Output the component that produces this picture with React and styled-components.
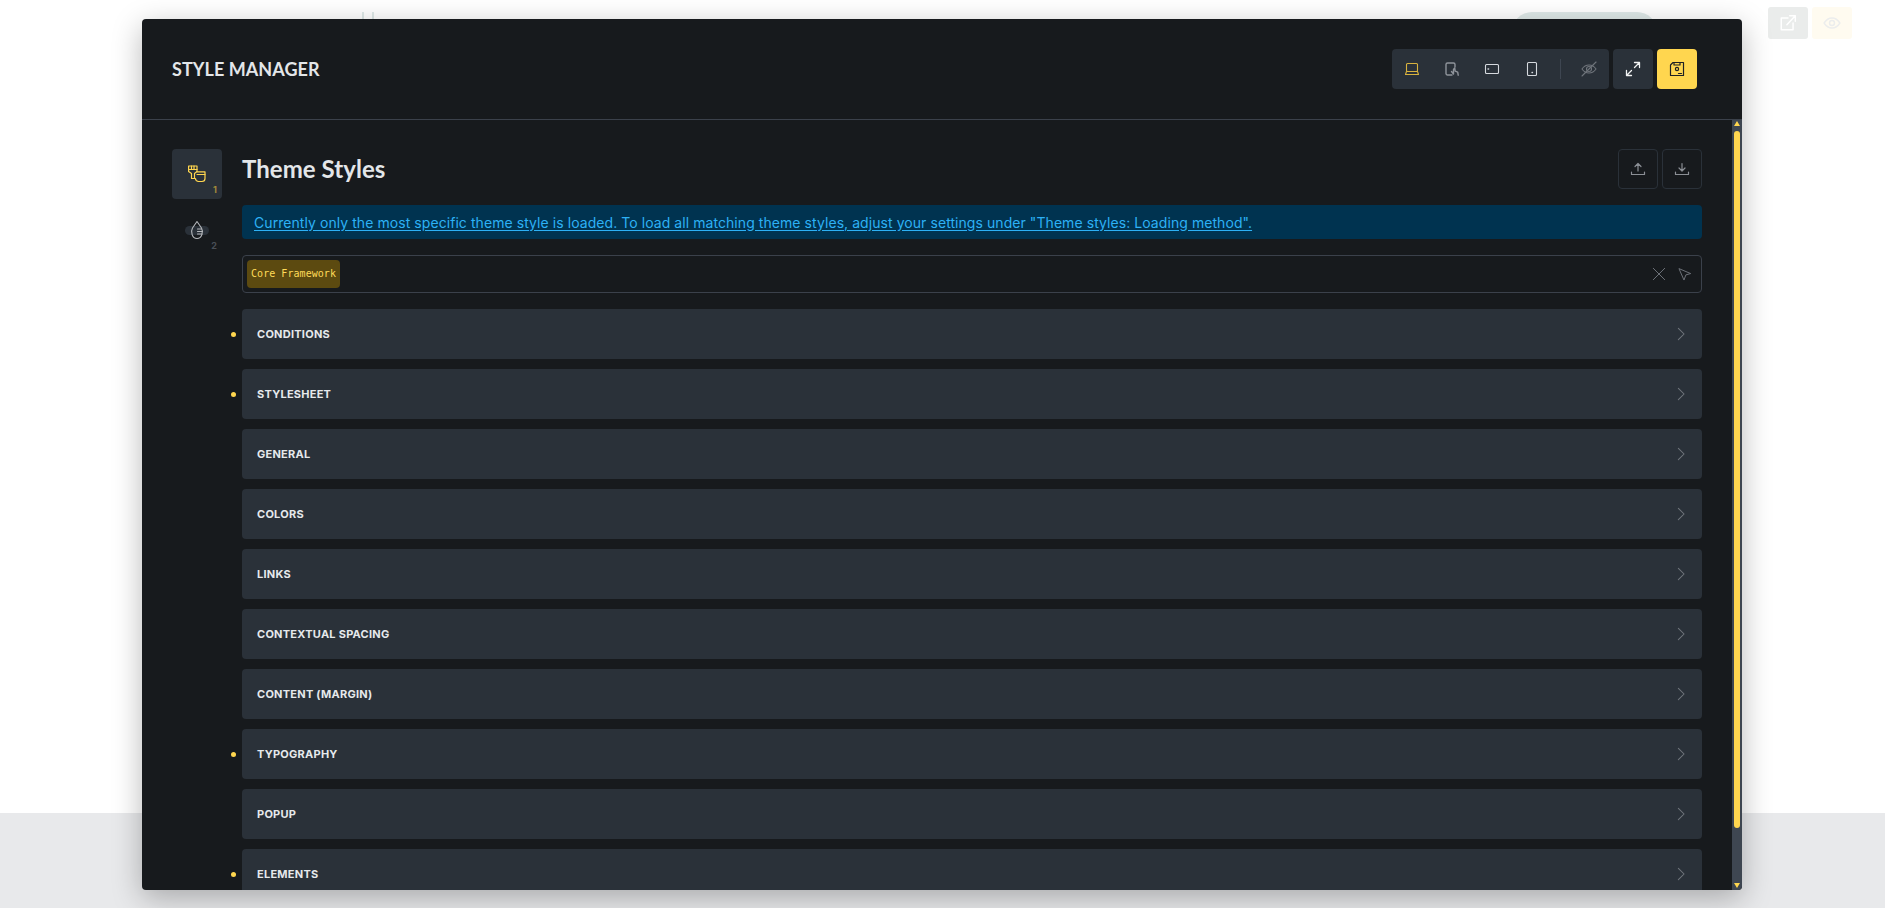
import React from 'react'
import styled, { createGlobalStyle } from 'styled-components'

const GlobalStyle = createGlobalStyle`
  html, body {
    margin: 0;
    height: 100%;
    overflow: hidden;
    background: #fff;
    font-family: Inter, "Liberation Sans", sans-serif;
  }
`

const Page = styled.div`
  position: relative;
  width: 1885px;
  height: 908px;
  display: flex;
  flex-direction: column;
  overflow: hidden;
`
const TopBar = styled.div`
  flex: 1;
  display: flex;
  align-items: flex-start;
  gap: 4px;
  padding: 7px 33px 0 362px;
`
const Tick = styled.span`
  width: 2px;
  height: 7px;
  margin: 5px 4px 0 0;
  background: #dfe9e8;
`
const Pill = styled.div`
  width: 145px;
  height: 40px;
  margin: 5px 107px 0 auto;
  border-radius: 20px;
  background: #dfe9e8;
`
const GhostButton = styled.div`
  width: 40px;
  height: 32px;
  border-radius: 3px;
  display: flex;
  align-items: center;
  justify-content: center;
  background: ${({ $tone }) => ($tone === 'yellow' ? '#fffbf0' : '#eaeceb')};
  color: ${({ $tone }) => ($tone === 'yellow' ? '#eceded' : '#ffffff')};
`
const Footer = styled.div`
  height: 95px;
  background: #e8e9eb;
`

const Modal = styled.div`
  position: absolute;
  left: 142px;
  top: 19px;
  width: 1600px;
  height: 871px;
  display: flex;
  flex-direction: column;
  border-radius: 4px;
  overflow: hidden;
  background: #171a1d;
  box-shadow: 0 8px 30px rgba(0, 0, 0, 0.28);
`
const Header = styled.header`
  flex: none;
  height: 101px;
  box-sizing: border-box;
  padding: 0 45px 0 30px;
  display: flex;
  align-items: center;
  justify-content: space-between;
  border-bottom: 1px solid #3b414b;
`
const Heading = styled.h2`
  margin: 0;
  font-family: Lato, sans-serif;
  font-size: 18px;
  font-weight: 700;
  letter-spacing: 0.05px;
  color: #e3e6e9;
  text-transform: uppercase;
`
const Actions = styled.div`
  display: flex;
  gap: 4px;
`
const ToolGroup = styled.div`
  display: flex;
  align-items: center;
  border-radius: 4px;
  background: #2a3139;
`
const ToolButton = styled.button`
  width: 40px;
  height: 40px;
  padding: 0;
  border: 0;
  border-radius: 4px;
  display: flex;
  align-items: center;
  justify-content: center;
  background: ${({ $fill }) => $fill || 'transparent'};
  color: ${({ $color }) => $color || '#d5d9de'};
`
const Separator = styled.span`
  width: 1px;
  height: 20px;
  margin: 0 8px;
  background: #3e4651;
`

const Body = styled.div`
  flex: 1;
  min-height: 0;
  display: flex;
`
const Scroller = styled.div`
  flex: 1;
  min-width: 0;
  overflow: hidden;
  display: flex;
  gap: 20px;
  align-items: flex-start;
  padding: 29px 30px 49px 30px;
  box-sizing: border-box;
`
const ScrollTrack = styled.div`
  flex: none;
  width: 10px;
  display: flex;
  flex-direction: column;
  align-items: center;
  background: #3e4651;
`
const ScrollArrow = styled.span`
  flex: none;
  width: 0;
  height: 0;
  margin: ${({ $down }) => ($down ? 'auto 0 2px' : '1px 0 5px')};
  border-left: 3.500px solid transparent;
  border-right: 3.500px solid transparent;
  ${({ $down }) =>
    $down ? 'border-top: 5px solid #ffd64f;' : 'border-bottom: 5px solid #ffd64f;'}
`
const ScrollThumb = styled.span`
  flex: none;
  width: 6px;
  height: 697px;
  border-radius: 3px;
  background: #ffd64f;
`

const Sidebar = styled.nav`
  flex: none;
  width: 50px;
  display: flex;
  flex-direction: column;
  gap: 6px;
`
const SideButton = styled.div`
  position: relative;
  width: 50px;
  height: 50px;
  border-radius: 4px;
  display: flex;
  align-items: center;
  justify-content: center;
  background: ${({ $active }) => ($active ? '#2a3139' : 'transparent')};
  color: ${({ $active }) => ($active ? '#ffd64f' : '#b5b8bc')};
`
const SideNumber = styled.span`
  position: absolute;
  right: 5px;
  bottom: 4px;
  font-size: 9px;
  font-weight: 700;
  line-height: 11px;
  color: ${({ $active }) => ($active ? '#a08a3c' : '#4a4f57')};
`
const Blob = styled.span`
  position: absolute;
  left: 13px;
  top: 21px;
  width: 24px;
  height: 9px;
  border-radius: 5px;
  background: #2a3139;
`
const DropIcon = styled.span`
  position: relative;
  display: flex;
`

const Content = styled.main`
  flex: 1;
  min-width: 0;
  display: flex;
  flex-direction: column;
  gap: 16px;
`
const TitleRow = styled.div`
  display: flex;
  align-items: center;
  justify-content: space-between;
  height: 40px;
`
const Title = styled.h1`
  margin: 0 0 2px;
  font-family: Lato, sans-serif;
  font-size: 24px;
  font-weight: 700;
  letter-spacing: 0.05px;
  color: #e3e6e9;
`
const TitleActions = styled.div`
  display: flex;
  gap: 4px;
`
const OutlineButton = styled.button`
  width: 40px;
  height: 40px;
  box-sizing: border-box;
  padding: 0;
  border: 1px solid #2a3139;
  border-radius: 4px;
  background: transparent;
  color: #8b8f95;
  display: flex;
  align-items: center;
  justify-content: center;
`
const Notice = styled.div`
  height: 34px;
  box-sizing: border-box;
  padding: 0 12px;
  display: flex;
  align-items: center;
  border-radius: 4px;
  background: #003350;
`
const NoticeLink = styled.a`
  font-size: 14px;
  letter-spacing: 0.065px;
  color: #2db1f5;
  text-decoration: underline;
  text-underline-offset: 2px;
`
const Picker = styled.div`
  height: 38px;
  box-sizing: border-box;
  padding: 0 9px 0 4px;
  display: flex;
  align-items: center;
  gap: 12px;
  border: 1px solid #3b414b;
  border-radius: 4px;
`
const Tag = styled.span`
  height: 28px;
  padding: 0 4px 2px;
  box-sizing: border-box;
  display: flex;
  align-items: center;
  border-radius: 4px;
  margin-right: auto;
  background: #5c4a10;
  color: #ffdb58;
  font-family: "DejaVu Sans Mono", monospace;
  font-size: 10px;
  letter-spacing: 0.05px;
`
const PickerIcon = styled.span`
  display: flex;
  color: #70757c;
`
const Sections = styled.div`
  display: flex;
  flex-direction: column;
  gap: 10px;
`
const Row = styled.div`
  position: relative;
  height: 50px;
  box-sizing: border-box;
  padding: 0 14px 0 15px;
  display: flex;
  align-items: center;
  justify-content: space-between;
  border-radius: 4px;
  background: #2a3139;
  color: #70757c;
  ${({ $marked }) =>
    $marked &&
    `
    &::before {
      content: '';
      position: absolute;
      left: -11px;
      top: 23px;
      width: 5px;
      height: 5px;
      border-radius: 50%;
      background: #ffd64f;
    }
  `}
`
const RowLabel = styled.span`
  margin-bottom: 1px;
  font-size: 11px;
  font-weight: 700;
  letter-spacing: 0.25px;
  color: #e6e9ec;
  text-transform: uppercase;
`

const Svg = styled.svg`
  display: block;
  fill: none;
  stroke: currentColor;
  stroke-width: ${({ $w }) => $w || 1.1};
  stroke-linecap: round;
  stroke-linejoin: round;
`
const Icon = ({ size = 16, w, children }) => (
  <Svg width={size} height={size} viewBox="0 0 16 16" $w={w}>
    {children}
  </Svg>
)

const sections = [
  ['Conditions', true],
  ['Stylesheet', true],
  ['General', false],
  ['Colors', false],
  ['Links', false],
  ['Contextual Spacing', false],
  ['Content (Margin)', false],
  ['Typography', true],
  ['Popup', false],
  ['Elements', true],
]

export default function App() {
  return (
    <Page>
      <GlobalStyle />
      <TopBar>
        <Tick />
        <Tick />
        <Pill />
        <GhostButton>
          <Icon size={18} w={1.3}>
            <path d="M8 3.500H2v10.500h10.500V8" />
            <path d="M7 9.500 14.500 1.500M9.500 1.500h5v5" />
          </Icon>
        </GhostButton>
        <GhostButton $tone="yellow">
          <Icon size={18} w={1.3}>
            <path d="M1 8c2-3.200 4.400-4.500 7-4.500s5 1.300 7 4.500c-2 3.200-4.400 4.500-7 4.500S3 11.200 1 8z" />
            <circle cx="8" cy="8" r="2.200" />
          </Icon>
        </GhostButton>
      </TopBar>
      <Footer />

      <Modal>
        <Header>
          <Heading>Style Manager</Heading>
          <Actions>
            <ToolGroup>
              <ToolButton $color="#d8b23e">
                <Icon>
                  <rect x="2.500" y="2.500" width="11" height="8" rx="1" />
                  <path d="M2.500 10.500h11l1 3H1.500z" />
                </Icon>
              </ToolButton>
              <ToolButton $color="#8f949b">
                <Icon w={1.4}>
                  <path d="M8 14H3.500A1.500 1.500 0 0 1 2 12.500v-9A1.500 1.500 0 0 1 3.500 2h6A1.500 1.500 0 0 1 11 3.500V6" />
                  <path d="M7.500 10.500 9.500 13V8.500l1.200-1.500.5 3.200 2.500 1 .5 3" />
                </Icon>
              </ToolButton>
              <ToolButton>
                <Icon>
                  <rect x="1.500" y="3.500" width="13" height="9" rx="1" />
                  <path d="M4 8h.6" strokeWidth="1.400" />
                </Icon>
              </ToolButton>
              <ToolButton>
                <Icon>
                  <rect x="3.500" y="1.500" width="9" height="13" rx="1" />
                  <path d="M8 11.500h.5" strokeWidth="1.400" />
                </Icon>
              </ToolButton>
              <Separator />
              <ToolButton $color="#6f747b">
                <Icon>
                  <path d="M1 8c2-3 4.400-4 7-4s5 1 7 4c-2 3-4.400 4-7 4s-5-1-7-4z" />
                  <circle cx="8" cy="8" r="2.500" />
                  <path d="M1 15 15 1" />
                </Icon>
              </ToolButton>
            </ToolGroup>
            <ToolButton $fill="#2a3139" $color="#f2f3f4">
              <Icon w={1.3}>
                <path d="M1.500 14.500 6.500 9.500M9.500 6.500l5-5M9.500 1.500h5v5M1.500 9.500v5h5" />
              </Icon>
            </ToolButton>
            <ToolButton $fill="#ffd64f" $color="#1f2124">
              <Icon w={1.2}>
                <path d="M4 1.500h10.500v13h-13V4z" />
                <path d="M5 1.500v2.500h6V1.500" />
                <circle cx="8" cy="8" r="1.600" />
                <path d="M9.500 12.500h3" />
              </Icon>
            </ToolButton>
          </Actions>
        </Header>

        <Body>
          <Scroller>
            <Sidebar>
              <SideButton $active>
                <Svg width="18" height="18" viewBox="0 0 18 18" $w={1.2}>
                  <path d="M.6 1h8.400v5.500L6.500 8.500v5h-3v-5L.6 6.500z" />
                  <path d="M.6 4.500H9M3.500 1v3.500M6 1v3.500" />
                  <path d="M9 6.800h8v6.700a3 3 0 0 1-3 3h-3.500a3 3 0 0 1-3-3" />
                  <path d="M9 9.500h8" />
                </Svg>
                <SideNumber $active>1</SideNumber>
              </SideButton>
              <SideButton>
                <Blob />
                <DropIcon>
                  <Svg width="16" height="20" viewBox="0 0 16 20" $w={1.1}>
                    <path d="M8 1.500 3.500 8C1.500 11.500 3 18.500 8 18.500s6.500-7 4.500-10.500z" />
                    <path d="M8.500 9h4M8.500 11.500h5M8.500 14h4.500" />
                  </Svg>
                </DropIcon>
                <SideNumber>2</SideNumber>
              </SideButton>
            </Sidebar>

            <Content>
              <TitleRow>
                <Title>Theme Styles</Title>
                <TitleActions>
                  <OutlineButton>
                    <Icon w={1.2}>
                      <path d="M1.500 11v2.500h13V11M8 10V2.500M5 5.500l3-3 3 3" />
                    </Icon>
                  </OutlineButton>
                  <OutlineButton>
                    <Icon w={1.2}>
                      <path d="M1.500 11v2.500h13V11M8 2.500V10M5 7l3 3 3-3" />
                    </Icon>
                  </OutlineButton>
                </TitleActions>
              </TitleRow>
              <Notice>
                <NoticeLink>
                  Currently only the most specific theme style is loaded. To load all matching theme
                  styles, adjust your settings under "Theme styles: Loading method".
                </NoticeLink>
              </Notice>
              <Picker>
                <Tag>Core Framework</Tag>
                <PickerIcon>
                  <Icon size={14}>
                    <path d="M1.500 1.500l13 13M14.500 1.500l-13 13" />
                  </Icon>
                </PickerIcon>
                <PickerIcon>
                  <Icon size={14}>
                    <path d="M1.500 2 14.500 7.500 9 9 7 14.500z" />
                  </Icon>
                </PickerIcon>
              </Picker>
              <Sections>
                {sections.map(([label, marked]) => (
                  <Row key={label} $marked={marked}>
                    <RowLabel>{label}</RowLabel>
                    <Icon size={14} w={1.2}>
                      <path d="M5 1.500 11.500 8 5 14.500" />
                    </Icon>
                  </Row>
                ))}
              </Sections>
            </Content>
          </Scroller>
          <ScrollTrack>
            <ScrollArrow />
            <ScrollThumb />
            <ScrollArrow $down />
          </ScrollTrack>
        </Body>
      </Modal>
    </Page>
  )
}
